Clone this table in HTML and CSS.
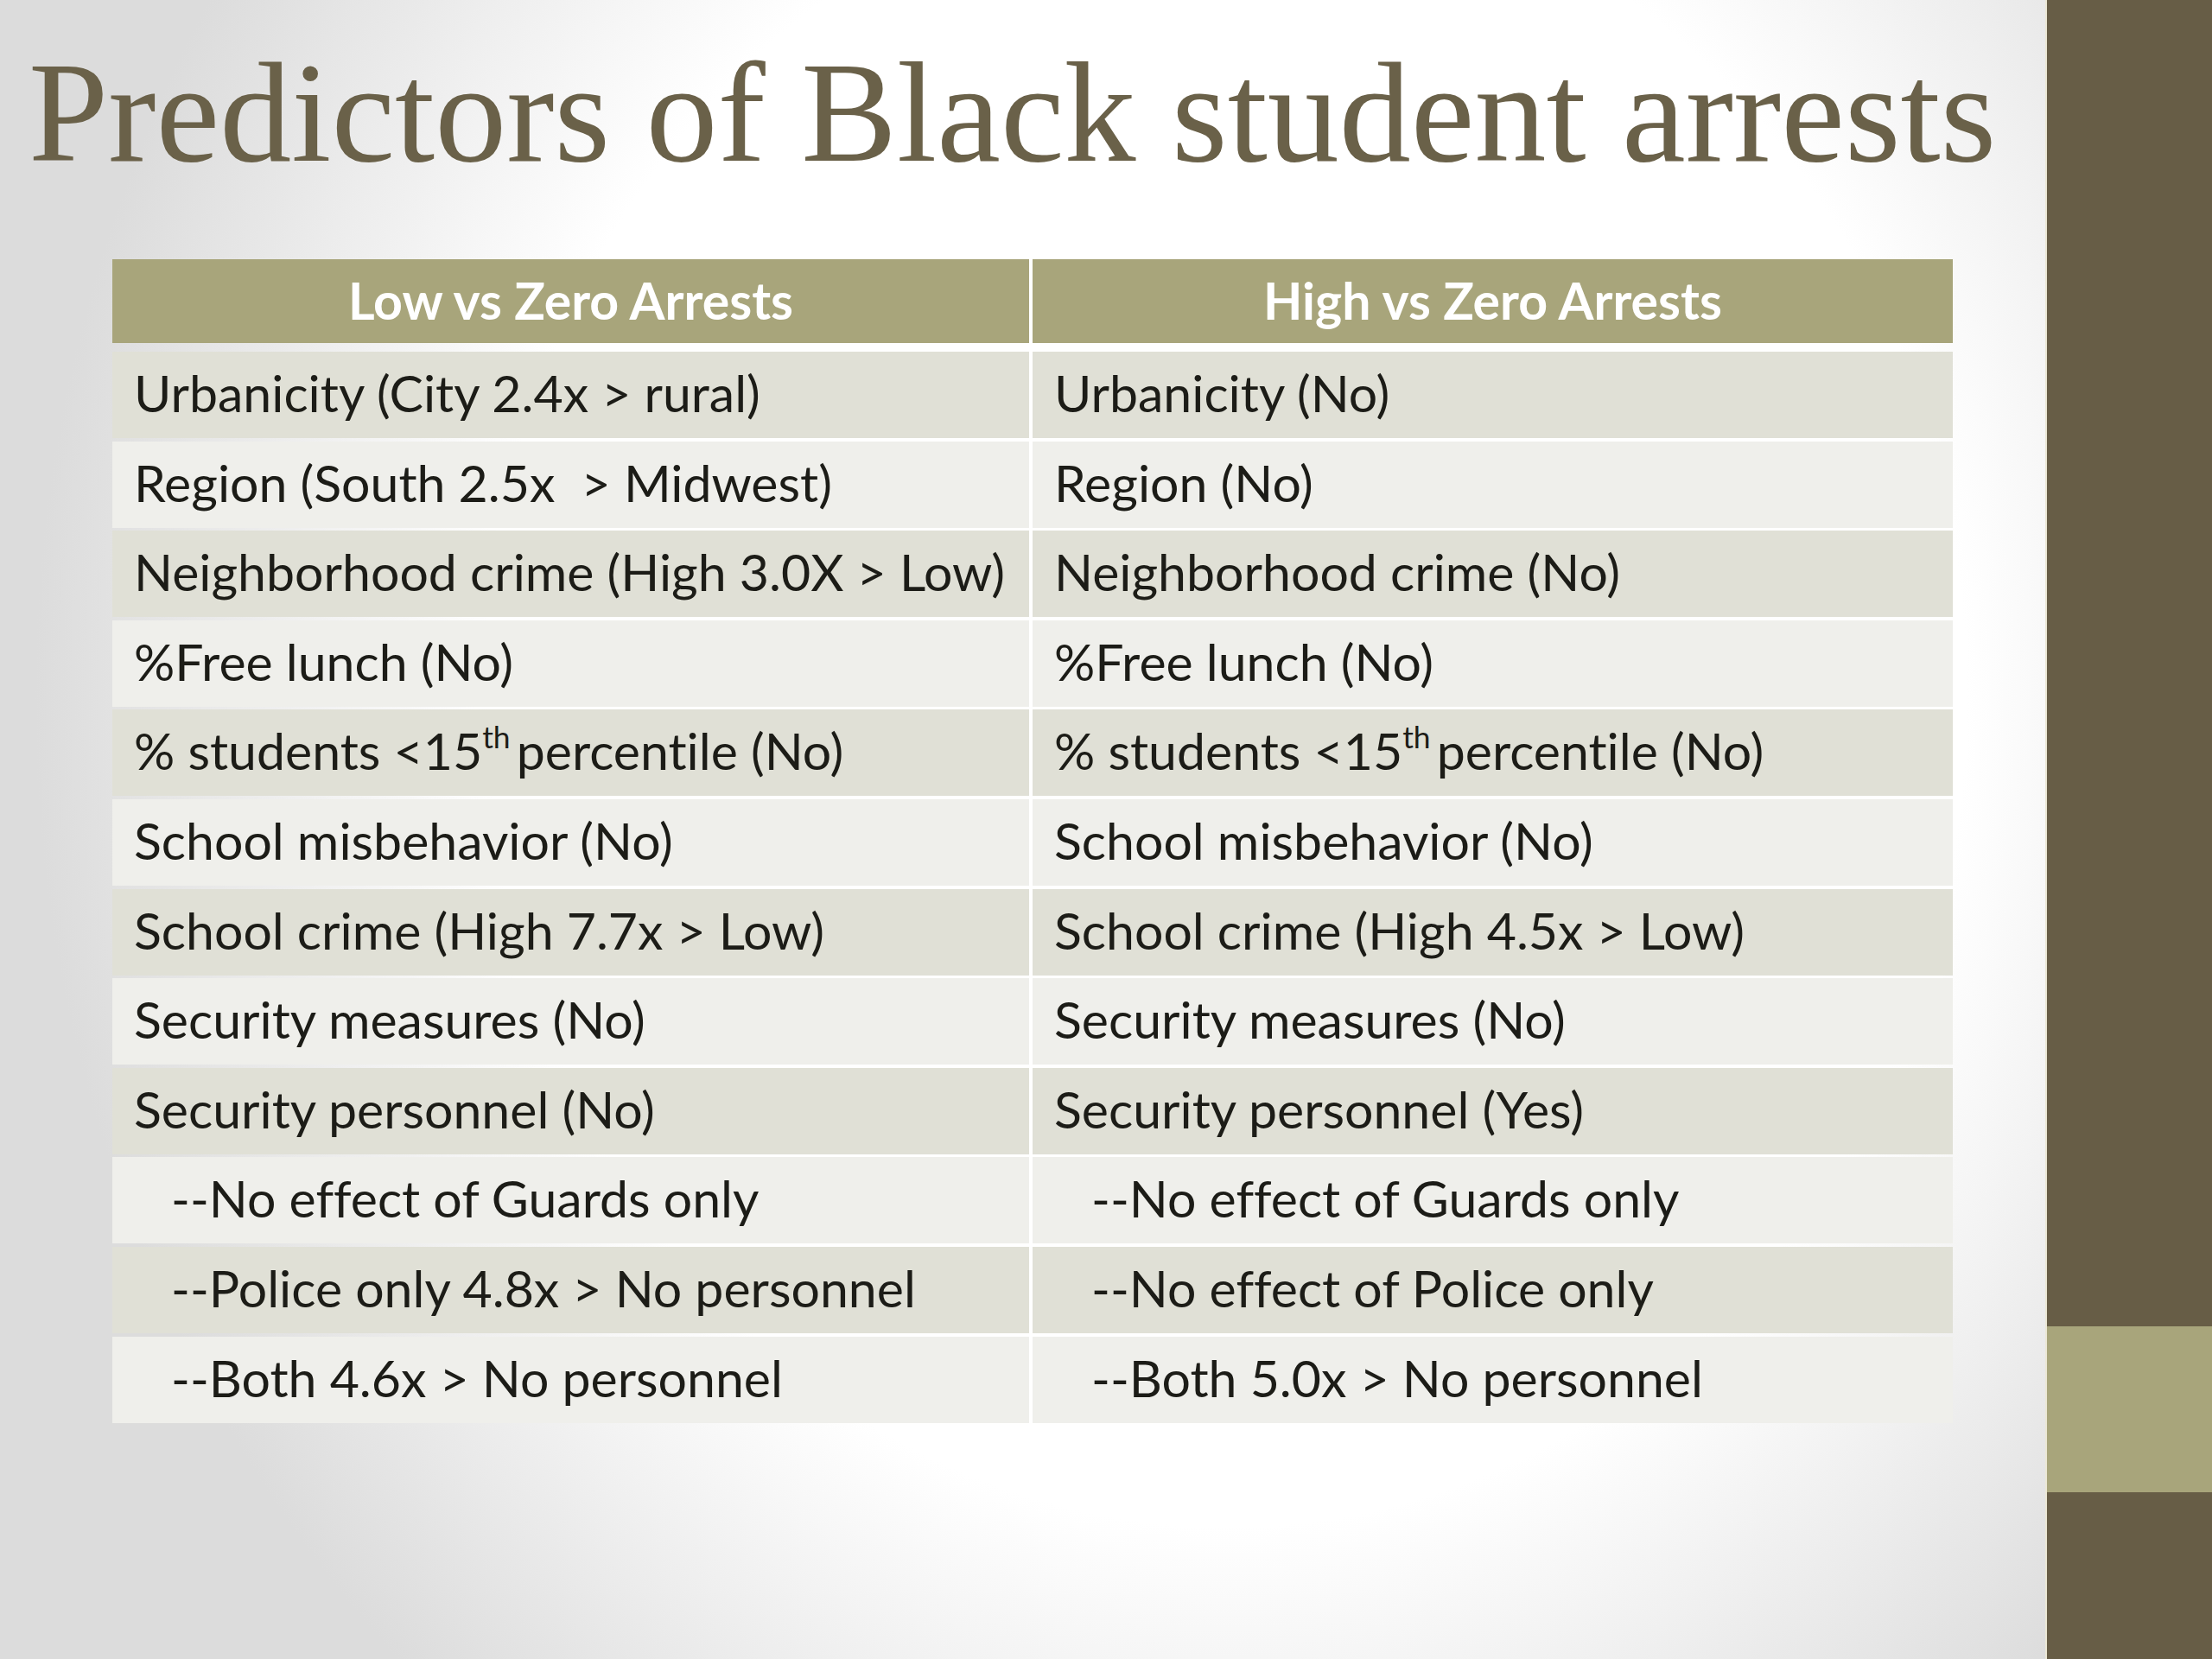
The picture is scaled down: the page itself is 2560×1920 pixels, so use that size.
FILE: index.html
```html
<!DOCTYPE html>
<html lang="en">
<head>
<meta charset="utf-8">
<title>Predictors of Black student arrests</title>
<link rel="stylesheet" href="styles.css">
</head>
<body>
<div class="slide">
  <main class="content">
    <h1 class="title">Predictors of Black student arrests</h1>
    <div class="grid">
      <div class="cell head">Low vs Zero Arrests</div>
      <div class="cell head">High vs Zero Arrests</div>

      <div class="cell dark">Urbanicity (City 2.4x &gt; rural)</div>
      <div class="cell dark">Urbanicity (No)</div>

      <div class="cell light">Region (South 2.5x&nbsp; &gt; Midwest)</div>
      <div class="cell light">Region (No)</div>

      <div class="cell dark">Neighborhood crime (High 3.0X &gt; Low)</div>
      <div class="cell dark">Neighborhood crime (No)</div>

      <div class="cell light">%Free lunch (No)</div>
      <div class="cell light">%Free lunch (No)</div>

      <div class="cell dark">% students &lt;15<sup>th</sup> percentile (No)</div>
      <div class="cell dark">% students &lt;15<sup>th</sup> percentile (No)</div>

      <div class="cell light">School misbehavior (No)</div>
      <div class="cell light">School misbehavior (No)</div>

      <div class="cell dark">School crime (High 7.7x &gt; Low)</div>
      <div class="cell dark">School crime (High 4.5x &gt; Low)</div>

      <div class="cell light">Security measures (No)</div>
      <div class="cell light">Security measures (No)</div>

      <div class="cell dark">Security personnel (No)</div>
      <div class="cell dark">Security personnel (Yes)</div>

      <div class="cell light sub">--No effect of Guards only</div>
      <div class="cell light sub">--No effect of Guards only</div>

      <div class="cell dark sub">--Police only 4.8x &gt; No personnel</div>
      <div class="cell dark sub">--No effect of Police only</div>

      <div class="cell light sub">--Both 4.6x &gt; No personnel</div>
      <div class="cell light sub">--Both 5.0x &gt; No personnel</div>
    </div>
  </main>
  <aside class="sidebar">
    <div class="band-dark top"></div>
    <div class="band-light"></div>
    <div class="band-dark bottom"></div>
  </aside>
</div>
</body>
</html>
```

FILE: styles.css
```css
html, body {
  margin: 0;
  padding: 0;
}

body {
  width: 2560px;
  height: 1920px;
  overflow: hidden;
  background: #ffffff;
}

.slide {
  display: flex;
  width: 2560px;
  height: 1920px;
}

.content {
  flex: 1;
  min-width: 0;
  overflow: hidden;
  background: radial-gradient(ellipse 1380px 1550px at 60% 42%, #ffffff 62%, #dcdcdc 100%);
}

.title {
  margin: 0;
  padding: 30px 0 0 33px;
  font-family: "Liberation Serif", "Times New Roman", serif;
  font-weight: normal;
  font-size: 166px;
  line-height: 200px;
  height: 270px;
  color: #6a6149;
  white-space: nowrap;
}

.grid {
  margin-left: 130px;
  width: 2130px;
  display: grid;
  grid-template-columns: 1061px 1065px;
  grid-template-rows: 103.4px;
  grid-auto-rows: 100px;
  column-gap: 4px;
  row-gap: 3.6px;
  font-family: Lato, "Open Sans", sans-serif;
  font-size: 59px;
  font-variant-ligatures: no-common-ligatures;
  color: #1c1c17;
}

.cell {
  display: flex;
  align-items: center;
  box-sizing: border-box;
  padding-left: 25px;
  padding-bottom: 5px;
  white-space: nowrap;
}

.head {
  height: 97px;
  align-self: start;
  justify-content: center;
  padding-left: 0;
  padding-bottom: 3px;
  background: #a8a57b;
  color: #ffffff;
  font-weight: bold;
}

.dark {
  background: #e0e0d6;
}

.light {
  background: #efefeb;
}

.sub {
  padding-left: 68px;
}

sup {
  font-size: 0.6em;
  line-height: 0;
  position: relative;
  top: -0.45em;
  vertical-align: baseline;
  margin-right: 0.2em;
}

.sidebar {
  flex: 0 0 193px;
  box-sizing: border-box;
  border-left: 2px solid #ece8d6;
  display: flex;
  flex-direction: column;
}

.band-dark {
  background: #675d46;
}

.band-dark.top {
  height: 1535px;
}

.band-light {
  height: 192px;
  background: #a8a57b;
}

.band-dark.bottom {
  flex: 1;
}
```
